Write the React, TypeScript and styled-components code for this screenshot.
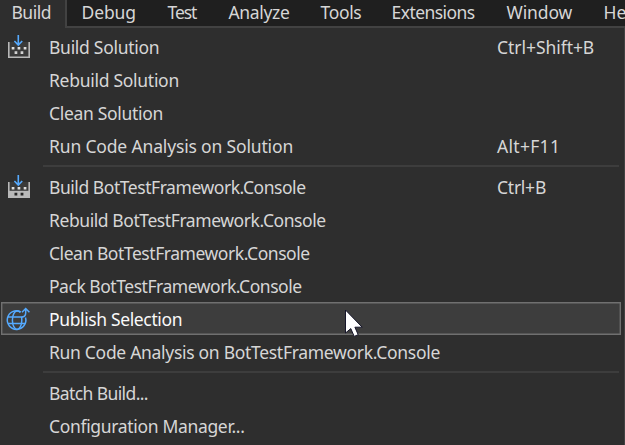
import React from "react";
import styled, { createGlobalStyle } from "styled-components";

const GlobalStyle = createGlobalStyle`
  body {
    margin: 0;
    overflow: hidden;
    background: #2e2e2e;
  }
`;

const Window = styled.div`
  position: relative;
  width: 625px;
  height: 445px;
  overflow: hidden;
  background: #2e2e2e;
  color: #d6d6d6;
  font: 17.5px/24px "Noto Sans", "Segoe UI", sans-serif;
  white-space: pre;
`;

const MenuBar = styled.nav`
  display: flex;
  height: 28px;
`;

const MenuTab = styled.div<{ $width: number; $active?: boolean }>`
  flex: none;
  box-sizing: border-box;
  width: ${(p) => p.$width}px;
  height: 28px;
  padding: ${(p) => (p.$active ? "0 0 0 11.5px" : "0 0 0 14.5px")};
  background: ${(p) => (p.$active ? "#2e2e2e" : "#1f1f1f")};
  border-right: ${(p) => (p.$active ? "2px solid #424242" : "none")};
  border-bottom: ${(p) => (p.$active ? "none" : "2px solid #424242")};
`;

const Label = styled.span<{ $track: number }>`
  letter-spacing: ${(p) => p.$track}px;
`;

const Panel = styled.div`
  box-sizing: border-box;
  height: 417px;
  padding: 2px 3px 0 1px;
  border-right: 1px solid #424242;
`;

const Row = styled.div<{ $selected?: boolean }>`
  display: grid;
  grid-template-columns: 48px 448px 1fr;
  box-sizing: border-box;
  width: 620px;
  height: 33px;
  color: ${(p) => (p.$selected ? "#fafafa" : "#d6d6d6")};
  background: ${(p) => (p.$selected ? "#3d3d3d" : "transparent")};
  box-shadow: ${(p) => (p.$selected ? "inset 0 0 0 1.4px #707070" : "none")};

  ${Label} {
    padding-top: 5px;
  }
`;

const Separator = styled.hr`
  width: 576px;
  height: 2px;
  margin: 3px 0 3px 42px;
  border: 0;
  background: #3d3d3d;
`;

const IconSvg = styled.svg`
  display: block;
  width: 33px;
  height: 33px;
`;

const Pointer = styled.svg`
  position: absolute;
  left: 344px;
  top: 308px;
  width: 22px;
  height: 30px;
`;

function BuildIcon({ filled = false }: { filled?: boolean }) {
  const dot = filled ? "#252525" : "#d2d2d2";
  return (
    <IconSvg viewBox="0 0 33 33">
      <path d="M7.7 12v15.3h20.6V12" fill="#3a3a3a" />
      {filled && <path d="M7.7 20.8h20.6v6.5H7.7z" fill="#b8b8b8" />}
      <path d="M7.8 12v15.2h20.4V12" fill="none" stroke="#b8b8b8" strokeWidth="1.6" />
      <path d="M10.7 17h2.7v2.5h-2.7zM16.6 17h2.7v2.5h-2.7zM22.7 17h2.7v2.5h-2.7z" fill="#dedede" />
      <path d={filled ? "M13.5 22.8h2.8v2.6h-2.8zM19.6 22.8h2.8v2.6h-2.8z" : "M13.6 21.3h2.7v2.6h-2.7zM19.6 21.3h2.7v2.6h-2.7z"} fill={dot} />
      <path d="M17.3 5v10M13.4 11l3.9 4 3.9-4" fill="none" stroke="#55aaff" strokeWidth="1.6" />
    </IconSvg>
  );
}

function PublishIcon() {
  return (
    <IconSvg viewBox="0 0 33 33" fill="none" stroke="#55aaff" strokeWidth="1.5">
      <path d="M19.8 9.8A9.3 9.3 0 1 0 24.5 15.5M7.4 15h14.2M7.4 21.4h17.2" />
      <path d="M19.3 10.5C18.5 9.5 17.4 9 16.1 9c-2.6 0-4.7 4.1-4.7 9.2s2.1 9.2 4.7 9.2 4.7-4.1 4.7-9.2c0-1.2-.1-2.3-.3-3.3" />
      <path d="M20.8 15c2.8 0 3.9-1.4 3.9-4.2V7M21 10.2l3.7-3.7 3.7 3.7" />
    </IconSvg>
  );
}

type Item = {
  text: string;
  track: number;
  icon?: React.ReactNode;
  keys?: string;
  keyTrack?: number;
  selected?: boolean;
};

const tabs = [
  { text: "Build", width: 67, track: -0.5, active: true },
  { text: "Debug", width: 86, track: -0.1 },
  { text: "Test", width: 61, track: -1.1 },
  { text: "Analyze", width: 92, track: -0.35 },
  { text: "Tools", width: 71, track: -0.35 },
  { text: "Extensions", width: 115, track: -0.55 },
  { text: "Window", width: 97, track: -0.1 },
  { text: "Help", width: 60, track: 0 },
];

const groups: Item[][] = [
  [
    { text: "Build Solution", track: -0.28, icon: <BuildIcon />, keys: "Ctrl+Shift+B", keyTrack: -0.05 },
    { text: "Rebuild Solution", track: -0.28 },
    { text: "Clean Solution", track: -0.32 },
    { text: "Run Code Analysis on Solution", track: -0.16, keys: "Alt+F11", keyTrack: 0.3 },
  ],
  [
    { text: "Build BotTestFramework.Console", track: -0.45, icon: <BuildIcon filled />, keys: "Ctrl+B", keyTrack: -0.25 },
    { text: "Rebuild BotTestFramework.Console", track: -0.42 },
    { text: "Clean BotTestFramework.Console", track: -0.45 },
    { text: "Pack BotTestFramework.Console", track: -0.47 },
    { text: "Publish Selection", track: -0.37, icon: <PublishIcon />, selected: true },
    { text: "Run Code Analysis on BotTestFramework.Console", track: -0.3 },
  ],
  [
    { text: "Batch Build...", track: -0.6 },
    { text: "Configuration Manager...", track: -0.33 },
  ],
];

export default function App() {
  return (
    <Window>
      <GlobalStyle />
      <MenuBar>
        {tabs.map((t) => (
          <MenuTab key={t.text} $width={t.width} $active={t.active}>
            <Label $track={t.track}>{t.text}</Label>
          </MenuTab>
        ))}
      </MenuBar>
      <Panel>
        {groups.map((items, i) => (
          <React.Fragment key={i}>
            {i > 0 && <Separator />}
            {items.map((item) => (
              <Row key={item.text} $selected={item.selected}>
                <div>{item.icon}</div>
                <Label $track={item.track}>{item.text}</Label>
                {item.keys && <Label $track={item.keyTrack ?? 0}>{item.keys}</Label>}
              </Row>
            ))}
          </React.Fragment>
        ))}
      </Panel>
      <Pointer viewBox="0 0 22 30">
        <path d="M1.5 2v23l5.3-4.4 3.4 7.8 4-1.7-3.3-7.5h7.3z" fill="#fff" stroke="#16162a" strokeWidth="1" />
      </Pointer>
    </Window>
  );
}
